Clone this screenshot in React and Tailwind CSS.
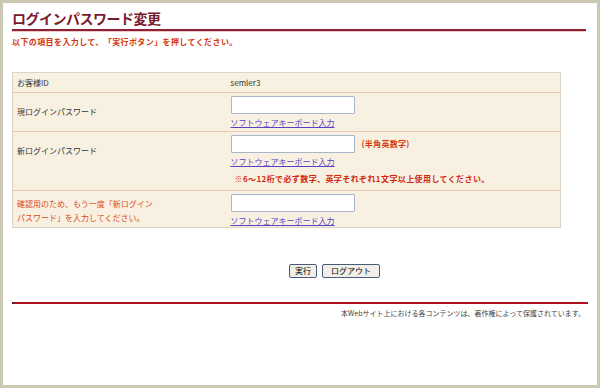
import React from 'react';

const jp = { fontFamily: '"MS PGothic", "Noto Sans CJK JP", "Liberation Sans", sans-serif' };

function KeyboardLink() {
  return (
    <a href="#" className="block text-[8px] leading-[10px] text-[#5b3fc4] underline mt-[4px]">
      ソフトウェアキーボード入力
    </a>
  );
}

function PwInput() {
  return (
    <input
      type="password"
      className="block w-[124px] h-[18px] bg-white border border-[#a9b6c9] rounded-[1px] outline-none"
    />
  );
}

export default function App() {
  return (
    <div
      className="w-[600px] h-[388px] border-[3px] border-[#cbc8b3] bg-white overflow-hidden flex flex-col pl-[9px] pr-[9px]"
      style={jp}
    >
      <div className="pt-[6px] border-b-2 border-[#8b2333] w-[574px]">
        <h1 className="text-[14px] leading-[18px] font-bold text-[#7a1b2c] pb-[2px] tracking-[-0.5px]">
          ログインパスワード変更
        </h1>
      </div>
      <div className="h-px w-[574px] bg-[#f0c8cc]" />
      <p className="text-[8px] leading-[10px] font-bold text-[#d2380f] mt-[5px] tracking-[0.4px]">
        以下の項目を入力して、「実行ボタン」を押してください。
      </p>

      <table className="mt-[25px] w-[549px] bg-[#f8f1e2] border border-[#dcd3c6] border-collapse text-[8px] text-[#333]">
        <tbody>
          <tr className="h-[20px] border-b border-[#ecc7b5]">
            <td className="w-[218px] pl-[4px] align-middle">お客様ID</td>
            <td className="align-middle">semler3</td>
          </tr>
          <tr className="h-[39px] border-b border-[#ecc7b5]">
            <td className="pl-[4px] align-middle">現ログインパスワード</td>
            <td className="align-top pt-[3px]">
              <PwInput />
              <KeyboardLink />
            </td>
          </tr>
          <tr className="h-[59px] border-b border-[#ecc7b5]">
            <td className="pl-[4px] align-top pt-[13px]">新ログインパスワード</td>
            <td className="align-top pt-[3px]">
              <div className="flex items-center">
                <PwInput />
                <span className="ml-[7px] text-[#d2380f] font-bold tracking-[0.3px]">(半角英数字)</span>
              </div>
              <KeyboardLink />
              <p className="mt-[7px] ml-[4px] text-[#d2280f] font-bold leading-[10px] tracking-[0.4px]">
                ※6～12桁で必ず数字、英字それぞれ1文字以上使用してください。
              </p>
            </td>
          </tr>
          <tr className="h-[37px]">
            <td className="pl-[4px] align-top pt-[6px] text-[#e04a1a] leading-[14px]">
              確認用のため、もう一度「新ログイン
              <br />
              パスワード」を入力してください。
            </td>
            <td className="align-top pt-[3px]">
              <PwInput />
              <KeyboardLink />
            </td>
          </tr>
        </tbody>
      </table>

      <div className="flex gap-[5px] mt-[36px] pl-[277px]">
        <button className="h-[14px] w-[28px] text-[8px] leading-[12px] bg-[#f1efe8] border border-[#4a5a7a] rounded-[2px] text-black">
          実行
        </button>
        <button className="h-[14px] w-[58px] text-[8px] leading-[12px] bg-[#f1efe8] border border-[#4a5a7a] rounded-[2px] text-black">
          ログアウト
        </button>
      </div>

      <div className="mt-[24px] w-[576px] h-[2px] bg-[#b0101c] border-l-2 border-[#333]" />
      <p className="mt-[5px] w-[573px] text-right text-[7px] leading-[9px] text-[#444]">
        本Webサイト上における各コンテンツは、著作権によって保護されています。
      </p>
    </div>
  );
}
